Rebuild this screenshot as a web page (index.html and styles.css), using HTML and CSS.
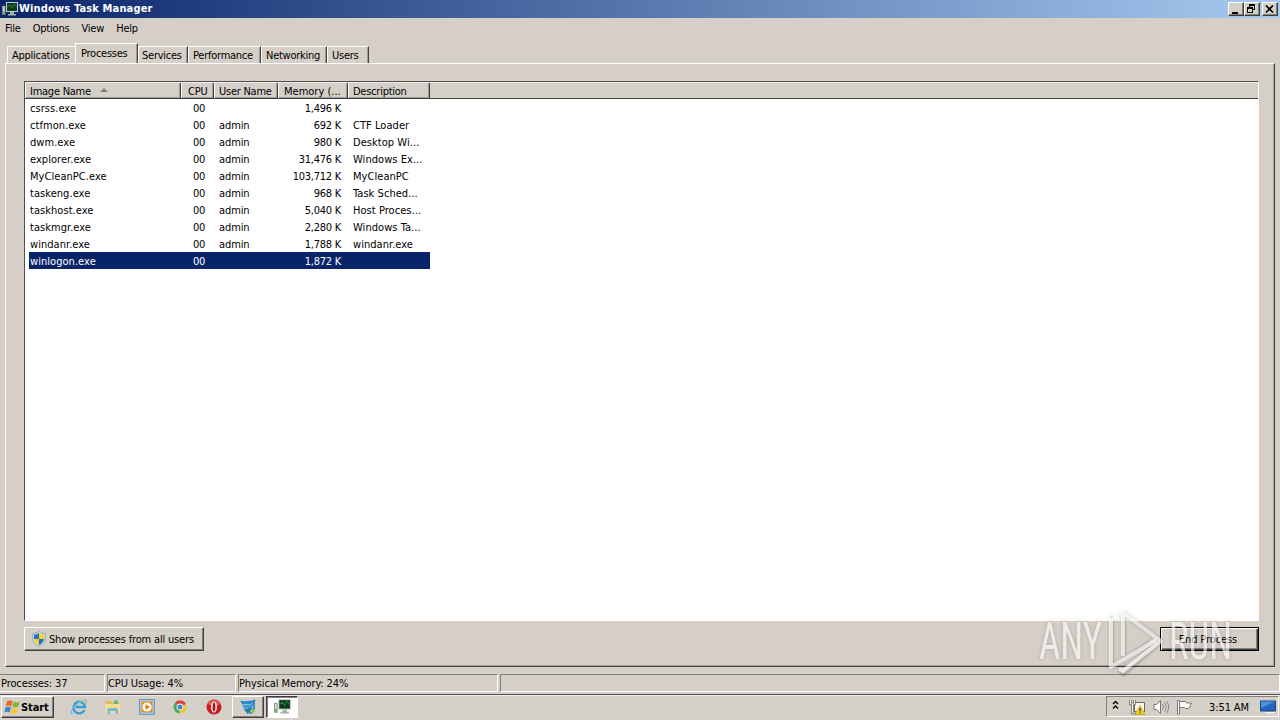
FILE: index.html
```html
<!DOCTYPE html>
<html lang="en">
<head>
  <meta charset="UTF-8">
  <meta name="viewport" content="width=device-width, initial-scale=1.0">
  <title>Windows Task Manager</title>
  <link rel="stylesheet" href="styles.css">
</head>
<body>
  <svg class="defs" width="0" height="0">
    <symbol id="monitor" viewBox="0 0 16 16">
      <path d="M.5 5h2.500v8.500H.5z" fill="#d8dcd8" stroke="#7b8580" stroke-width=".8"/>
      <path d="M1 10.500h1.500V13H1z" fill="#3fae4a"/>
      <path d="M4 1h12v10H4z" fill="#c5ccc8"/>
      <path d="M5 2h10v8H5z" fill="#0b3a1c"/>
      <path d="M5 6l3-2 2 3 2-4 3 3" fill="none" stroke="#2b7a39"/>
      <path d="M8 11h4v2h2v1.500H6V13h2z" fill="#a4b0aa"/>
    </symbol>
  </svg>

  <div class="window">
    <header class="titlebar">
      <svg class="title-icon" width="16" height="16"><use href="#monitor"/></svg>
      <h1>Windows Task Manager</h1>
      <div class="controls">
        <button class="ctl"><svg width="12" height="10"><path d="M3 8h6v2H3z"/></svg></button>
        <button class="ctl"><svg width="12" height="10"><path d="M4 0h6v6H8V5h1V2H5v1H4zM2 3h6v6H2zM3 5v3h4V5z" fill-rule="evenodd"/></svg></button>
        <button class="ctl close"><svg width="12" height="10"><path d="M3 1.500l7 7M10 1.500l-7 7" stroke="#000" stroke-width="1.600"/></svg></button>
      </div>
    </header>

    <nav class="menu">
      <span>File</span><span>Options</span><span>View</span><span>Help</span>
    </nav>

    <div class="tabs">
      <span class="tab t-app">Applications</span>
      <span class="tab t-proc active">Processes</span>
      <span class="tab t-serv">Services</span>
      <span class="tab t-perf">Performance</span>
      <span class="tab t-net">Networking</span>
      <span class="tab t-users">Users</span>
    </div>

    <main class="pane">
      <div class="list">
        <div class="list-head">
          <span>Image Name <i class="sort"></i></span><span>CPU</span><span>User Name</span><span>Memory (...</span><span>Description</span>
        </div>
        <div class="row"><span>csrss.exe</span><span>00</span><span></span><span>1,496 K</span><span></span></div>
        <div class="row"><span>ctfmon.exe</span><span>00</span><span>admin</span><span>692 K</span><span>CTF Loader</span></div>
        <div class="row"><span>dwm.exe</span><span>00</span><span>admin</span><span>980 K</span><span>Desktop Wi...</span></div>
        <div class="row"><span>explorer.exe</span><span>00</span><span>admin</span><span>31,476 K</span><span>Windows Ex...</span></div>
        <div class="row"><span>MyCleanPC.exe</span><span>00</span><span>admin</span><span>103,712 K</span><span>MyCleanPC</span></div>
        <div class="row"><span>taskeng.exe</span><span>00</span><span>admin</span><span>968 K</span><span>Task Sched...</span></div>
        <div class="row"><span>taskhost.exe</span><span>00</span><span>admin</span><span>5,040 K</span><span>Host Proces...</span></div>
        <div class="row"><span>taskmgr.exe</span><span>00</span><span>admin</span><span>2,280 K</span><span>Windows Ta...</span></div>
        <div class="row"><span>windanr.exe</span><span>00</span><span>admin</span><span>1,788 K</span><span>windanr.exe</span></div>
        <div class="row selected"><span>winlogon.exe</span><span>00</span><span></span><span>1,872 K</span><span></span></div>
      </div>
      <div class="actions">
        <button class="btn show-all">
          <svg width="14" height="16" viewBox="0 0 14 16">
            <path d="M7 .5C5 2 3 2.500 .8 2.500V8c0 3.500 3 6 6.200 7.500C10.200 14 13.200 11.500 13.200 8V2.500C11 2.500 9 2 7 .5z" fill="#dfe7ea" stroke="#8199a8" stroke-width=".8"/>
            <path d="M7 2C5.500 3 4 3.500 2 3.600V8h5z" fill="#2c6fc4"/>
            <path d="M7 2c1.500 1 3 1.500 5 1.600V8H7z" fill="#f5d728"/>
            <path d="M2 8h5v6.200C4.500 13 2.200 11 2 8z" fill="#f0d12a"/>
            <path d="M12 8H7v6.200C9.500 13 11.800 11 12 8z" fill="#2c6fc4"/>
          </svg>
          Show processes from all users
        </button>
        <button class="btn end">End Process</button>
      </div>
    </main>

    <footer class="status">
      <span>Processes: 37</span><span>CPU Usage: 4%</span><span>Physical Memory: 24%</span><span></span>
    </footer>
  </div>

  <div class="taskbar">
    <button class="start">
      <svg width="17" height="16" viewBox="0 0 17 16">
        <path d="M3 2.500C5 1 6.500 1.200 8.500 2.300L7.300 7.400C5.500 6.300 4 6.300 1.800 7.500z" fill="#ea6524"/>
        <path d="M9.500 2.700c2 1 4 1 6.300-.2l-1.400 5c-2 1.200-4 1.200-6 .2z" fill="#7fb73b"/>
        <path d="M1.500 8.600c2-1.200 3.700-1.200 5.500-.1L5.700 13.500C4 12.300 2.200 12.400.3 13.500z" fill="#3c84d0"/>
        <path d="M8 9c2 1 4 1 6.100-.1l-1.300 5c-2 1.200-4.200 1.100-6.100.1z" fill="#fac52c"/>
      </svg>
      <span>Start</span>
    </button>
    <div class="quick">
      <svg width="18" height="18" viewBox="0 0 18 18">
        <path d="M14.500 12A5.800 5.800 0 1 1 15 9H5.500" fill="none" stroke="#369bd8" stroke-width="2.300"/>
        <path d="M3 15.500C-1 17 2 9.500 8 5S18 1.500 15.500 5.500" fill="none" stroke="#6fbbe0" stroke-width="1.300"/>
        <path d="M15.500 5C17 1.500 13 2 10 3.500" fill="none" stroke="#e5bd3c" stroke-width="1"/>
      </svg>
      <svg width="18" height="18" viewBox="0 0 18 18">
        <path d="M2 3h5l1 1.500h7V8H2z" fill="#e4bb52"/>
        <path d="M10 2.500h4V6h-4z" fill="#6cb675"/>
        <path d="M1.500 6h14.500v9H1.500z" fill="#f5df91"/>
        <path d="M3.500 16v-4.500q0-1.500 1.500-1.500h7.500q1.500 0 1.500 1.500V16h-2.500v-3H6v3z" fill="#75b9df"/>
      </svg>
      <svg width="18" height="18" viewBox="0 0 18 18">
        <path d="M1.500 1.500h15v15h-15z" fill="#9dc9e8" stroke="#6399c4"/>
        <path d="M3.500 3.500h11v11h-11z" fill="#f28a17"/>
        <circle cx="9" cy="9" r="4.600" fill="#fff"/>
        <path d="M7.500 6v6L12 9z" fill="#e87a10"/>
      </svg>
      <svg width="18" height="18" viewBox="0 0 18 18">
        <path d="M9 9L3.700 5.200A6.500 6.500 0 0 1 15 6.200z" fill="#d94235"/>
        <path d="M9 9l6-2.800a6.500 6.500 0 0 1-6.500 9.200z" fill="#f2c62e"/>
        <path d="M9 9l-.5 6.400A6.500 6.500 0 0 1 3.700 5.200z" fill="#4da65a"/>
        <circle cx="9" cy="9" r="3.400" fill="#f6f6ee"/>
        <circle cx="9" cy="9" r="2.500" fill="#4285d4"/>
      </svg>
      <svg width="18" height="18" viewBox="0 0 18 18">
        <circle cx="9" cy="9" r="7.500" fill="#c61d25"/>
        <path d="M3 5q6-6 12 0-1 3-6 3T3 5z" fill="#e35f5b"/>
        <ellipse cx="9" cy="9" rx="3" ry="5.500" fill="#f8eeee"/>
        <ellipse cx="9" cy="9" rx="1.400" ry="4.500" fill="#a8151c"/>
      </svg>
    </div>
    <button class="task">
      <svg width="18" height="18" viewBox="0 0 18 18">
        <path d="M1 2.500C6 4 11 3 17 1.500 15 6 10 7 3 6z" fill="#298ac9"/>
        <path d="M2.500 6.500c4 1 9 .5 13-2C14 9.500 10 11 5 10z" fill="#3d9ed6"/>
        <path d="M4.500 10.500c3 .5 7-.5 9-2-.5 4-2.500 6-5 7.500z" fill="#2278bd"/>
        <path d="M15 3v8l-4 5" fill="none" stroke="#2278bd" stroke-width="1.500"/>
        <path d="M13.500 10.500v5M11 13h5" stroke="#91c65a" stroke-width="1.800"/>
      </svg>
    </button>
    <button class="task current"><svg width="17" height="17"><use href="#monitor"/></svg></button>
    <div class="tray">
      <svg class="chev" width="7" height="10" viewBox="0 0 7 10"><path d="M1 4l2.500-2.500L6 4M1 8.500L3.500 6 6 8.500" fill="none" stroke="#000" stroke-width="1.400"/></svg>
      <svg class="net" width="17" height="16" viewBox="0 0 17 16">
        <path d="M5.500 3.500h10v9h-10z" fill="#f6f6f3" stroke="#66675f"/>
        <path d="M1.500 1v4h4V1M3.500 5v9h5" fill="none" stroke="#66675f" stroke-width="2.400"/>
        <path d="M1.500 1v4h4V1M3.500 5v9h5" fill="none" stroke="#fff" stroke-width=".9"/>
        <path d="M11 6.500L16 15.500H6z" fill="#f4d51f" stroke="#c29f15" stroke-width=".7"/>
        <path d="M10.500 9h1.200v3.500h-1.200zM10.500 13.300h1.200v1.200h-1.200z" fill="#333"/>
      </svg>
      <svg class="vol" width="17" height="16" viewBox="0 0 17 16">
        <path d="M1 5.500h2.500L7.500 1.500v13l-4-4H1z" fill="#fff" stroke="#777"/>
        <path d="M9.500 5q2 3 0 6M11.500 3.500q3.300 4.500 0 9M13.500 2q4.500 6 0 12" fill="none" stroke="#888"/>
      </svg>
      <svg class="flag" width="17" height="16" viewBox="0 0 17 16">
        <path d="M1.500 1.500h2v13.500h-2z" fill="#fff" stroke="#777"/>
        <path d="M3.500 2.500h6l1 1.500h5l-1.500 3-1.500 2.500H9.500L8.500 8.500h-5z" fill="#fff" stroke="#777"/>
      </svg>
      <span class="clock">3:51 AM</span>
      <svg width="16" height="14" viewBox="0 0 16 14">
        <path d="M.5 1h15v10H.5z" fill="#2165c0" stroke="#174585"/>
        <path d="M1 1.500h14L1 8z" fill="#4d91dc"/>
        <path d="M5 12h10v1.500H5z" fill="#eee"/>
      </svg>
    </div>
  </div>

  <svg class="watermark" width="204" height="70" viewBox="0 0 204 70">
    <path class="wm-shadow" d="M76 9v51l38-25M82 63l6 5 38-34L88 7v42"/>
    <g class="wm-face">
      <text x="3" y="52" textLength="63" lengthAdjust="spacingAndGlyphs">ANY</text>
      <text x="133" y="52" textLength="63" lengthAdjust="spacingAndGlyphs">RUN</text>
      <path d="M81 9l-6 4v47l45-27M87 49V6l38 28-38 30-4-2"/>
    </g>
  </svg>
</body>
</html>
```

FILE: styles.css
```css
* {
  box-sizing: border-box;
}
body {
  margin: 0;
  width: 1280px;
  height: 720px;
  overflow: hidden;
  display: flex;
  flex-direction: column;
  background: #d4d0c8;
  color: #000;
  font-family: "DejaVu Sans Condensed", "DejaVu Sans", sans-serif;
  font-size: 11px;
  font-stretch: condensed;
  letter-spacing: -0.1px;
  white-space: nowrap;
}
button {
  font: inherit;
  letter-spacing: inherit;
  color: inherit;
  padding: 0;
  background: #d4d0c8;
}
svg {
  display: block;
  flex: none;
}
.defs {
  position: absolute;
}
.window {
  height: 694px;
  display: flex;
  flex-direction: column;
  background: #d6cfc8;
}

/* title bar */
.titlebar {
  height: 18px;
  display: flex;
  align-items: center;
  padding: 0 2px;
  background: linear-gradient(to right, #0a246a, #a6caf0);
}
.titlebar h1 {
  margin: 0 auto 0 1px;
  color: #fff;
  font-size: 11px;
  line-height: 18px;
  letter-spacing: 0.15px;
}
.controls {
  display: flex;
}
.ctl {
  width: 16px;
  height: 14px;
  border: 1px solid;
  border-color: #fff #404040 #404040 #fff;
  box-shadow: inset -1px -1px #808080;
}
.close {
  margin-left: 2px;
}

/* menu and tabs */
.menu {
  height: 20px;
  display: flex;
  gap: 12px;
  padding-left: 5px;
  line-height: 21px;
  letter-spacing: -0.2px;
}
.tabs {
  height: 25px;
  display: flex;
  align-items: flex-end;
  padding-left: 7px;
  letter-spacing: -0.25px;
}
.tab {
  height: 17px;
  line-height: 17px;
  padding-left: 4px;
  border-top: 1px solid #fff;
  border-left: 1px solid #fff;
  border-right: 1px solid #404040;
  box-shadow: inset -1px 0 #a09b95;
}
.active {
  height: 21px;
  line-height: 19px;
  margin-bottom: -1px;
  background: #d6cfc8;
}
.t-app { width: 68px; border-right: 0; box-shadow: none; }
.t-proc { width: 63px; padding-left: 5px; }
.t-serv { width: 50px; padding-left: 3px; }
.t-perf { width: 73px; }
.t-net { width: 66px; }
.t-users { width: 42px; }

/* process list */
.pane {
  height: 604px;
  margin: 0 5px;
  padding: 17px 15px 0 18px;
  border: 1px solid;
  border-color: #fff #404040 #404040 #fff;
  box-shadow: inset -1px -1px #aaa49e;
}
.list {
  height: 540px;
  background: #fff;
  border: 1px solid;
  border-color: #505050 #fff #fff #505050;
}
.list-head,
.row {
  display: grid;
  grid-template-columns: 156px 33px 64px 70px 82px 1fr;
}
.list-head {
  height: 17px;
  line-height: 17px;
  letter-spacing: -0.25px;
  background: #d4d0c8;
  border-top: 1px solid #eee;
  border-bottom: 1px solid #404040;
}
.list-head span {
  height: 15px;
  padding-left: 5px;
  border-right: 1px solid #404040;
  box-shadow: inset -1px 0 #a09b95, inset 1px 0 #fff, inset 0 -1px #a09b95;
}
.list-head span:nth-child(2) {
  padding-left: 7px;
}
.list-head span:nth-child(4) {
  padding-left: 6px;
  letter-spacing: 0;
}
.sort {
  display: inline-block;
  margin: 0 0 3px 6px;
  border: 4px solid transparent;
  border-top: 0;
  border-bottom-color: #808080;
}
.row {
  height: 17px;
  line-height: 19px;
}
.row span {
  padding-left: 5px;
}
.row span:first-child,
.row span:last-child {
  letter-spacing: 0.05px;
}
.row span:nth-child(2),
.row span:nth-child(4) {
  padding: 0 7px 0 0;
  text-align: right;
  letter-spacing: -0.25px;
}
.row span:nth-child(2) {
  padding-right: 9px;
}
.selected {
  width: 401px;
  margin-left: 4px;
  grid-template-columns: 152px 33px 64px 70px 82px;
  background: #0a246a;
  color: #fff;
}
.selected span:first-child {
  padding-left: 1px;
}

/* buttons under the list */
.actions {
  display: flex;
  justify-content: space-between;
  padding-top: 6px;
}
.btn {
  height: 24px;
  border: 1px solid;
  border-color: #fff #404040 #404040 #fff;
  box-shadow: inset -1px -1px #808080;
}
.show-all {
  width: 180px;
  display: flex;
  align-items: center;
  gap: 3px;
  padding-left: 7px;
  letter-spacing: -0.17px;
}
.end {
  width: 99px;
  padding-right: 3px;
  border-color: #000;
  box-shadow: inset 1px 1px #fff, inset -1px -1px #404040, inset -2px -2px #808080;
}

/* status bar */
.status {
  height: 18px;
  margin-top: 7px;
  display: grid;
  grid-template-columns: 105px 129px 260px 1fr;
  gap: 2px;
  line-height: 17px;
}
.status span {
  height: 18px;
  border: 1px solid;
  border-color: #808080 #fff #fff #808080;
}
.status span:first-child {
  padding-left: 1px;
  border-left: 0;
}

/* taskbar */
.taskbar {
  height: 26px;
  display: flex;
  align-items: center;
  padding-bottom: 2px;
  border-top: 1px solid #505050;
  box-shadow: inset 0 1px #eee;
}
.start {
  width: 53px;
  height: 22px;
  margin-left: 1px;
  padding-left: 2px;
  display: flex;
  align-items: center;
  font-weight: bold;
  border: 1px solid;
  border-color: #fff #404040 #404040 #fff;
  box-shadow: inset -1px -1px #808080;
}
.start span {
  padding-top: 1px;
}
.quick {
  display: flex;
  gap: 15.8px;
  margin-left: 16px;
}
.task {
  width: 32px;
  height: 22px;
  margin-left: 9px;
  display: flex;
  align-items: center;
  justify-content: center;
  border: 1px solid;
  border-color: #fff #404040 #404040 #fff;
  box-shadow: inset -1px -1px #808080;
}
.current {
  margin-left: 2px;
  background: #fff;
  border-color: #404040 #fff #fff #404040;
  box-shadow: inset 1px 1px #808080;
}
.tray {
  width: 173px;
  height: 21px;
  margin-left: auto;
  margin-right: 1px;
  padding-left: 5px;
  display: flex;
  align-items: center;
  border: 1px solid;
  border-color: #808080 #fff #fff #808080;
}
.chev { margin-bottom: 3px; }
.net { margin-left: 10px; }
.vol { margin-left: 7px; }
.flag { margin-left: 6px; }
.clock {
  width: 51px;
  margin-left: 16px;
  padding-top: 1px;
}

/* logo lying over the bottom right corner */
.watermark {
  position: absolute;
  left: 1036px;
  top: 607px;
  overflow: visible;
  font-family: Roboto, sans-serif;
  font-size: 52px;
  font-weight: 400;
  letter-spacing: 0;
}
.watermark path {
  fill: none;
  stroke-width: 4;
  stroke-linejoin: round;
}
.wm-shadow {
  stroke: #000;
  opacity: 0.1;
}
.wm-face {
  fill: #fff;
  opacity: 0.6;
  filter: drop-shadow(0 0 2px rgba(0,0,0,0.3));
}
.wm-face path {
  stroke: #fff;
}
```
